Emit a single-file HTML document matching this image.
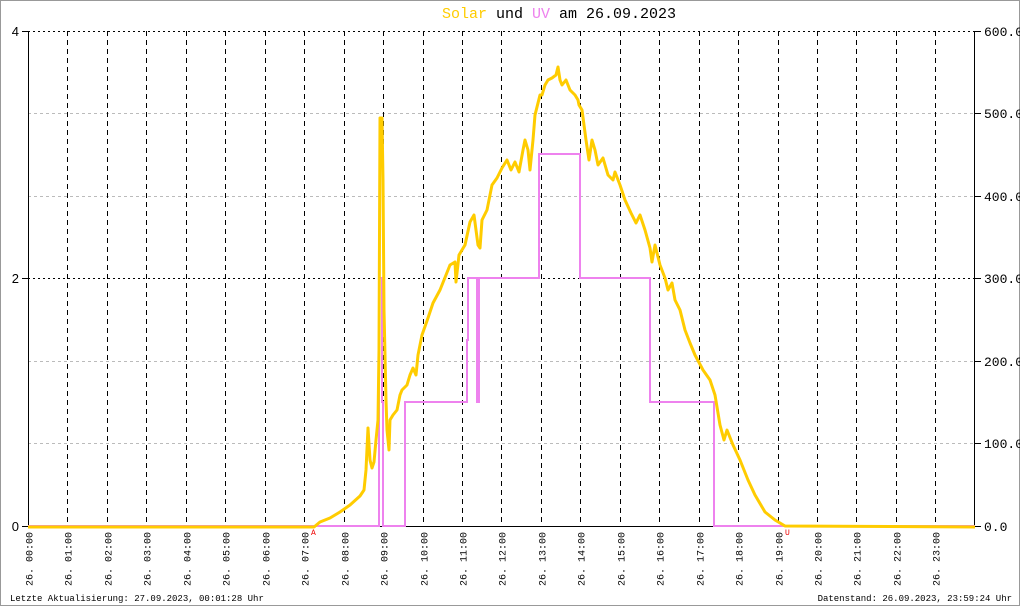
<!DOCTYPE html>
<html><head><meta charset="utf-8"><style>
html,body{margin:0;padding:0;background:#fff}
svg{display:block}
</style></head><body>
<svg width="1020" height="606" viewBox="0 0 1020 606" xmlns="http://www.w3.org/2000/svg" font-family="Liberation Mono, monospace">
<rect x="0.5" y="0.5" width="1019" height="605" fill="#fff" stroke="#999" stroke-width="1"/>
<text x="559" y="18" font-size="15" text-anchor="middle"><tspan fill="#ffcc00">Solar</tspan><tspan fill="#000"> und </tspan><tspan fill="#ee82ee">UV</tspan><tspan fill="#000"> am 26.09.2023</tspan></text>
<g stroke="#bbb" stroke-dasharray="3,3" stroke-width="1">
<line x1="28" y1="113.5" x2="975" y2="113.5"/><line x1="28" y1="196.5" x2="975" y2="196.5"/>
<line x1="28" y1="361.5" x2="975" y2="361.5"/><line x1="28" y1="443.5" x2="975" y2="443.5"/>
</g>
<g stroke="#000" stroke-dasharray="2,3" stroke-width="1">
<line x1="28" y1="31.5" x2="975" y2="31.5"/><line x1="28" y1="278.5" x2="975" y2="278.5"/>
</g>
<g stroke="#000" stroke-dasharray="5,4" stroke-width="1" id="vg"></g>
<line x1="28.5" y1="31" x2="28.5" y2="526" stroke="#000"/>
<line x1="974.5" y1="31" x2="974.5" y2="526" stroke="#000"/>
<line x1="28" y1="526.5" x2="975" y2="526.5" stroke="#000"/>
<g stroke="#000"><line x1="22" y1="31.5" x2="28" y2="31.5"/><line x1="22" y1="278.5" x2="28" y2="278.5"/><line x1="22" y1="526.5" x2="28" y2="526.5"/>
<line x1="975" y1="31.5" x2="981" y2="31.5"/><line x1="975" y1="113.5" x2="981" y2="113.5"/><line x1="975" y1="196.5" x2="981" y2="196.5"/><line x1="975" y1="278.5" x2="981" y2="278.5"/><line x1="975" y1="361.5" x2="981" y2="361.5"/><line x1="975" y1="443.5" x2="981" y2="443.5"/><line x1="975" y1="526.5" x2="981" y2="526.5"/></g>
<g font-family="Liberation Sans, sans-serif" font-size="13" fill="#000" text-anchor="end">
<text x="19" y="36">4</text><text x="19" y="283">2</text><text x="19" y="531">0</text></g>
<g font-size="13" fill="#000">
<text x="984" y="36">600.0</text><text x="984" y="118">500.0</text><text x="984" y="201">400.0</text><text x="984" y="283">300.0</text><text x="984" y="366">200.0</text><text x="984" y="448">100.0</text><text x="984" y="531">0.0</text></g>
<g id="xl" font-size="10" fill="#000"></g>
<polyline fill="none" stroke="#ee82ee" stroke-width="2" points="28,526 379,526 379,278 382,278 382,402 383,402 383,526 405,526 405,402 467,402 467,340 468,340 468,278 477,278 477,402 479,402 479,278 481,278 481,278 539,278 539,154 580,154 580,278 650,278 650,402 714,402 714,526 975,526"/>
<polyline fill="none" stroke="#ffcc00" stroke-width="3" stroke-linejoin="round" points="28,527 314,527 320,522 330,518 340,512 350,505 360,496 364,490 366,470 368,428 370,460 372,468 374,462 376,440 378,420 379,350 380,118 382,118 383,180 384,310 386,400 387,430 389,450 390,420 393,415 397,410 400,395 402,390 407,385 410,375 413,368 416,375 418,355 422,335 428,318 433,303 440,290 446,275 450,265 455,262 456,282 459,255 465,245 470,222 474,215 478,245 480,248 482,220 487,210 492,185 497,178 502,168 507,160 511,170 515,162 519,172 523,150 525,140 528,150 530,170 533,140 535,115 540,95 542,95 545,85 548,80 552,78 556,75 558,67 560,80 562,85 566,80 570,90 575,95 578,100 579,105 582,110 586,140 589,160 592,140 595,150 598,165 603,158 608,175 613,180 615,172 620,185 625,200 631,213 636,223 640,215 645,230 650,248 652,262 655,245 660,265 665,278 668,290 672,283 675,300 680,310 685,330 690,343 695,355 703,370 710,380 715,395 720,425 724,440 727,430 733,445 740,460 748,480 755,495 765,512 775,520 785,526 975,527"/>
<text x="311" y="535" font-size="8" fill="#e00">A</text>
<text x="785" y="535" font-size="8" fill="#e00">U</text>
<text x="10" y="601" font-size="9" fill="#000">Letzte Aktualisierung: 27.09.2023, 00:01:28 Uhr</text>
<text x="1012" y="601" font-size="9" fill="#000" text-anchor="end">Datenstand: 26.09.2023, 23:59:24 Uhr</text>
</svg>
<script>
var ns="http://www.w3.org/2000/svg",vg=document.getElementById("vg"),xl=document.getElementById("xl");
for(var h=0;h<24;h++){var x=Math.round(28+h*39.45)+0.5;
if(h>0){var l=document.createElementNS(ns,"line");l.setAttribute("x1",x);l.setAttribute("x2",x);l.setAttribute("y1",31);l.setAttribute("y2",526);vg.appendChild(l);}
var t=document.createElementNS(ns,"text");t.setAttribute("transform","translate("+(x+4)+",586) rotate(-90)");t.textContent="26. "+(h<10?"0":"")+h+":00";xl.appendChild(t);}
</script>
</body></html>
